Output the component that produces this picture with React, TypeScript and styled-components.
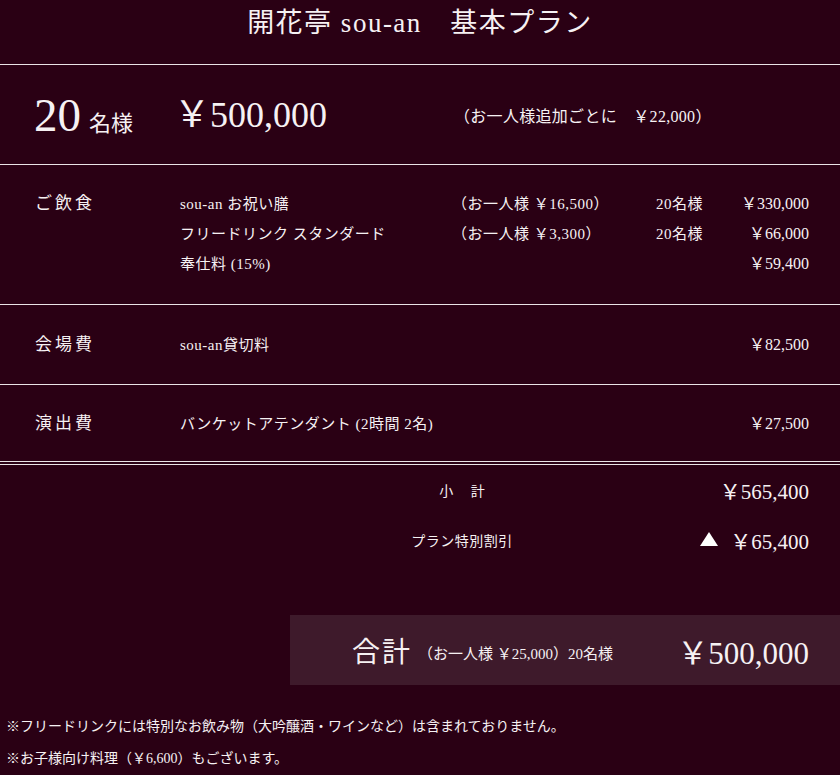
import React from "react";
import styled, { createGlobalStyle } from "styled-components";

const Global = createGlobalStyle`
  html, body { margin: 0; padding: 0; background: #2a0014; }
  body {
    font-family: "Liberation Serif", "Noto Sans CJK JP", serif;
    color: #f6f1f3;
  }
`;

const Page = styled.div`
  width: 840px;
  min-height: 775px;
  background: #2a0014;
`;

const Title = styled.h1`
  margin: 0;
  height: 65px;
  box-sizing: border-box;
  padding-top: 6px;
  text-align: center;
  font-weight: 400;
  font-size: 27px;
  line-height: 34px;
  border-bottom: 1px solid #e9e2e5;
  letter-spacing: 1.5px;
`;

const PriceRow = styled.div`
  height: 99px;
  display: grid;
  grid-template-columns: 146px 280px 1fr;
  align-items: center;
  padding-left: 34px;
  border-bottom: 1px solid #e9e2e5;
`;

const Guests = styled.div`
  display: flex;
  align-items: baseline;
  padding-top: 2px;
`;

const BigNum = styled.span`
  font-size: 47px;
  line-height: 1;
`;

const Unit = styled.span<{ $size: number }>`
  font-size: ${(p) => p.$size}px;
  margin-left: 8px;
`;

const BigPrice = styled.div`
  font-size: 36px;
  line-height: 1;
  margin-left: -6px;
`;

const SideNote = styled.div`
  font-size: 16px;
  letter-spacing: 0.3px;
  margin-left: -6px;
`;

const Section = styled.div<{ $h: number; $pt: number; $double?: boolean }>`
  box-sizing: border-box;
  height: ${(p) => p.$h}px;
  padding: ${(p) => p.$pt}px 31px 0 35px;
  display: flex;
  align-items: flex-start;
  border-bottom: ${(p) => (p.$double ? "4px double #e9e2e5" : "1px solid #e9e2e5")};
`;

const Label = styled.div`
  width: 145px;
  flex: none;
  font-size: 17px;
  line-height: 30px;
  letter-spacing: 3px;
`;

const Items = styled.div`
  flex: 1;
  display: flex;
  flex-direction: column;
`;

const Item = styled.div`
  display: grid;
  grid-template-columns: 272px 204px 80px 1fr;
  font-size: 15px;
  line-height: 30px;
  letter-spacing: 0.5px;
`;

const Amount = styled.div`
  text-align: right;
  font-size: 16px;
  letter-spacing: 0;
`;

const Summary = styled.div`
  padding: 10px 31px 0 0;
  display: flex;
  flex-direction: column;
  gap: 20px;
`;

const SumRow = styled.div`
  display: grid;
  grid-template-columns: 387px 150px 1fr;
  align-items: center;
  height: 30px;
`;

const SumLabel = styled.div<{ $spaced?: boolean }>`
  grid-column: 2;
  text-align: center;
  font-size: 14px;
  letter-spacing: ${(p) => (p.$spaced ? "0" : "0.5px")};
  white-space: pre;
`;

const SumAmount = styled.div`
  text-align: right;
  font-size: 21px;
  display: flex;
  justify-content: flex-end;
  align-items: center;
  gap: 12px;
`;

const Triangle = styled.span`
  display: inline-block;
  width: 0;
  height: 0;
  border-left: 9px solid transparent;
  border-right: 9px solid transparent;
  border-bottom: 14px solid #ffffff;
  margin-bottom: 2px;
`;

const TotalBox = styled.div`
  margin: 60px 0 0 290px;
  height: 70px;
  background: #3e1a2b;
  display: flex;
  align-items: center;
  padding: 0 31px 0 62px;
`;

const TotalLabel = styled.div`
  font-size: 28px;
  letter-spacing: 2px;
  margin-right: 6px;
`;

const TotalNote = styled.div`
  font-size: 15px;
  flex: 1;
  padding-top: 4px;
`;

const TotalAmount = styled.div`
  font-size: 31px;
`;

const Notes = styled.div`
  padding: 26px 0 0 6px;
  font-size: 14px;
  line-height: 32px;
`;

type Line = { name: string; per?: string; count?: string; amount: string };

const food: Line[] = [
  { name: "sou-an お祝い膳", per: "（お一人様 ￥16,500）", count: "20名様", amount: "￥330,000" },
  { name: "フリードリンク スタンダード", per: "（お一人様 ￥3,300）", count: "20名様", amount: "￥66,000" },
  { name: "奉仕料 (15%)", amount: "￥59,400" },
];

const ItemList = ({ lines }: { lines: Line[] }) => (
  <Items>
    {lines.map((l) => (
      <Item key={l.name}>
        <div>{l.name}</div>
        <div>{l.per ?? ""}</div>
        <div>{l.count ?? ""}</div>
        <Amount>{l.amount}</Amount>
      </Item>
    ))}
  </Items>
);

export default function App() {
  return (
    <Page>
      <Global />
      <Title>開花亭 sou-an　基本プラン</Title>
      <PriceRow>
        <Guests>
          <BigNum>20</BigNum>
          <Unit $size={22}>名様</Unit>
        </Guests>
        <BigPrice>￥500,000</BigPrice>
        <SideNote>（お一人様追加ごとに　￥22,000）</SideNote>
      </PriceRow>
      <Section $h={140} $pt={24}>
        <Label>ご飲食</Label>
        <ItemList lines={food} />
      </Section>
      <Section $h={80} $pt={25}>
        <Label>会場費</Label>
        <ItemList lines={[{ name: "sou-an貸切料", amount: "￥82,500" }]} />
      </Section>
      <Section $h={80} $pt={24} $double>
        <Label>演出費</Label>
        <ItemList lines={[{ name: "バンケットアテンダント (2時間 2名)", amount: "￥27,500" }]} />
      </Section>
      <Summary>
        <SumRow>
          <SumLabel $spaced>{"小　 計"}</SumLabel>
          <SumAmount>￥565,400</SumAmount>
        </SumRow>
        <SumRow>
          <SumLabel>プラン特別割引</SumLabel>
          <SumAmount>
            <Triangle />
            ￥65,400
          </SumAmount>
        </SumRow>
      </Summary>
      <TotalBox>
        <TotalLabel>合計</TotalLabel>
        <TotalNote>（お一人様 ￥25,000）20名様</TotalNote>
        <TotalAmount>￥500,000</TotalAmount>
      </TotalBox>
      <Notes>
        <div>※フリードリンクには特別なお飲み物（大吟醸酒・ワインなど）は含まれておりません。</div>
        <div>※お子様向け料理（￥6,600）もございます。</div>
      </Notes>
    </Page>
  );
}
